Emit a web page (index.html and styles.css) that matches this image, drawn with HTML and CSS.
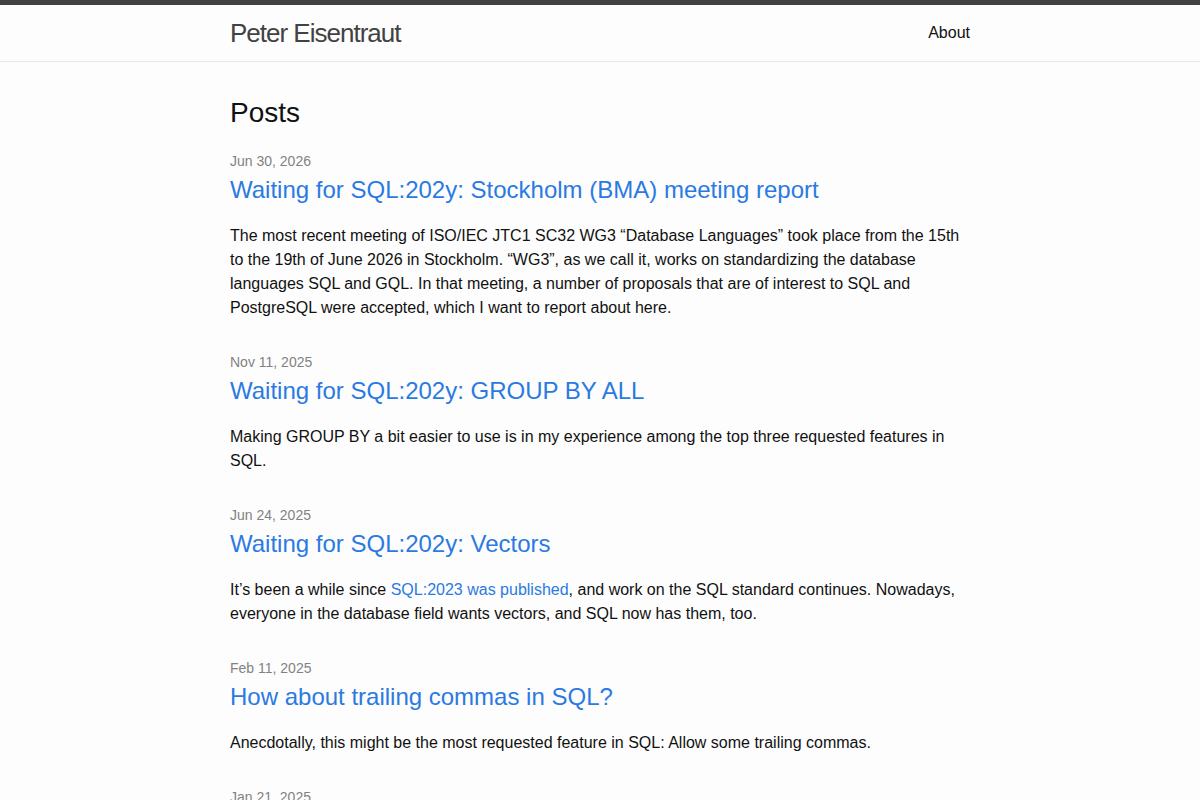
FILE: index.html
```html
<!DOCTYPE html>
<html lang="en">
<head>
<meta charset="utf-8">
<title>Peter Eisentraut</title>
<link rel="stylesheet" href="styles.css">
</head>
<body>
<header class="site-header">
  <div class="wrapper header-inner">
    <a class="site-title" href="#">Peter Eisentraut</a>
    <nav class="site-nav">
      <a class="page-link" href="#">About</a>
    </nav>
  </div>
</header>
<main class="page-content">
  <div class="wrapper">
    <h2 class="post-list-heading">Posts</h2>
    <ul class="post-list">
      <li>
        <span class="post-meta">Jun 30, 2026</span>
        <h3><a class="post-link" href="#">Waiting for SQL:202y: Stockholm (BMA) meeting report</a></h3>
        <p>The most recent meeting of ISO/IEC JTC1 SC32 WG3 “Database Languages” took place from the 15th to the 19th of June 2026 in Stockholm. “WG3”, as we call it, works on standardizing the database languages SQL and GQL. In that meeting, a number of proposals that are of interest to SQL and PostgreSQL were accepted, which I want to report about here.</p>
      </li>
      <li>
        <span class="post-meta">Nov 11, 2025</span>
        <h3><a class="post-link" href="#">Waiting for SQL:202y: GROUP BY ALL</a></h3>
        <p>Making GROUP BY a bit easier to use is in my experience among the top three requested features in SQL.</p>
      </li>
      <li>
        <span class="post-meta">Jun 24, 2025</span>
        <h3><a class="post-link" href="#">Waiting for SQL:202y: Vectors</a></h3>
        <p>It’s been a while since <a class="inline-link" href="#">SQL:2023 was published</a>, and work on the SQL standard continues. Nowadays, everyone in the database field wants vectors, and SQL now has them, too.</p>
      </li>
      <li>
        <span class="post-meta">Feb 11, 2025</span>
        <h3><a class="post-link" href="#">How about trailing commas in SQL?</a></h3>
        <p>Anecdotally, this might be the most requested feature in SQL: Allow some trailing commas.</p>
      </li>
      <li>
        <span class="post-meta">Jan 21, 2025</span>
        <h3><a class="post-link" href="#">More posts</a></h3>
        <p>More posts.</p>
      </li>
    </ul>
  </div>
</main>
</body>
</html>
```

FILE: styles.css
```css
* { box-sizing: border-box; }

html, body {
  margin: 0;
  padding: 0;
}

body {
  font-family: "Liberation Sans", Arial, Helvetica, sans-serif;
  font-size: 16px;
  line-height: 1.5;
  font-weight: 400;
  color: #111111;
  background-color: #fdfdfd;
}

a {
  color: #2a7ae2;
  text-decoration: none;
}

.wrapper {
  max-width: 800px;
  margin: 0 auto;
  padding: 0 30px;
}

.site-header {
  border-top: 5px solid #424242;
  border-bottom: 1px solid #e8e8e8;
}

.header-inner {
  display: flex;
  justify-content: space-between;
  align-items: center;
  height: 56px;
}

.site-title {
  font-size: 26px;
  font-weight: 300;
  line-height: 54px;
  letter-spacing: -1px;
  color: #424242;
}

.site-nav {
  line-height: 54px;
}

.page-link {
  color: #111111;
}

.page-content {
  padding: 30px 0;
}

.post-list-heading {
  font-size: 28px;
  font-weight: 400;
  margin: 0 0 17px;
  line-height: 1.5;
}

.post-list {
  list-style: none;
  margin: 0;
  padding: 0;
}

.post-list li {
  margin-bottom: 32px;
}

.post-meta {
  display: block;
  font-size: 14px;
  color: #828282;
  line-height: 1.5;
}

.post-list h3 {
  margin: 0 0 16px;
  font-size: 24px;
  font-weight: 400;
  line-height: 1.5;
}

.post-link {
  display: block;
}

.post-list p {
  margin: 0;
}
```
